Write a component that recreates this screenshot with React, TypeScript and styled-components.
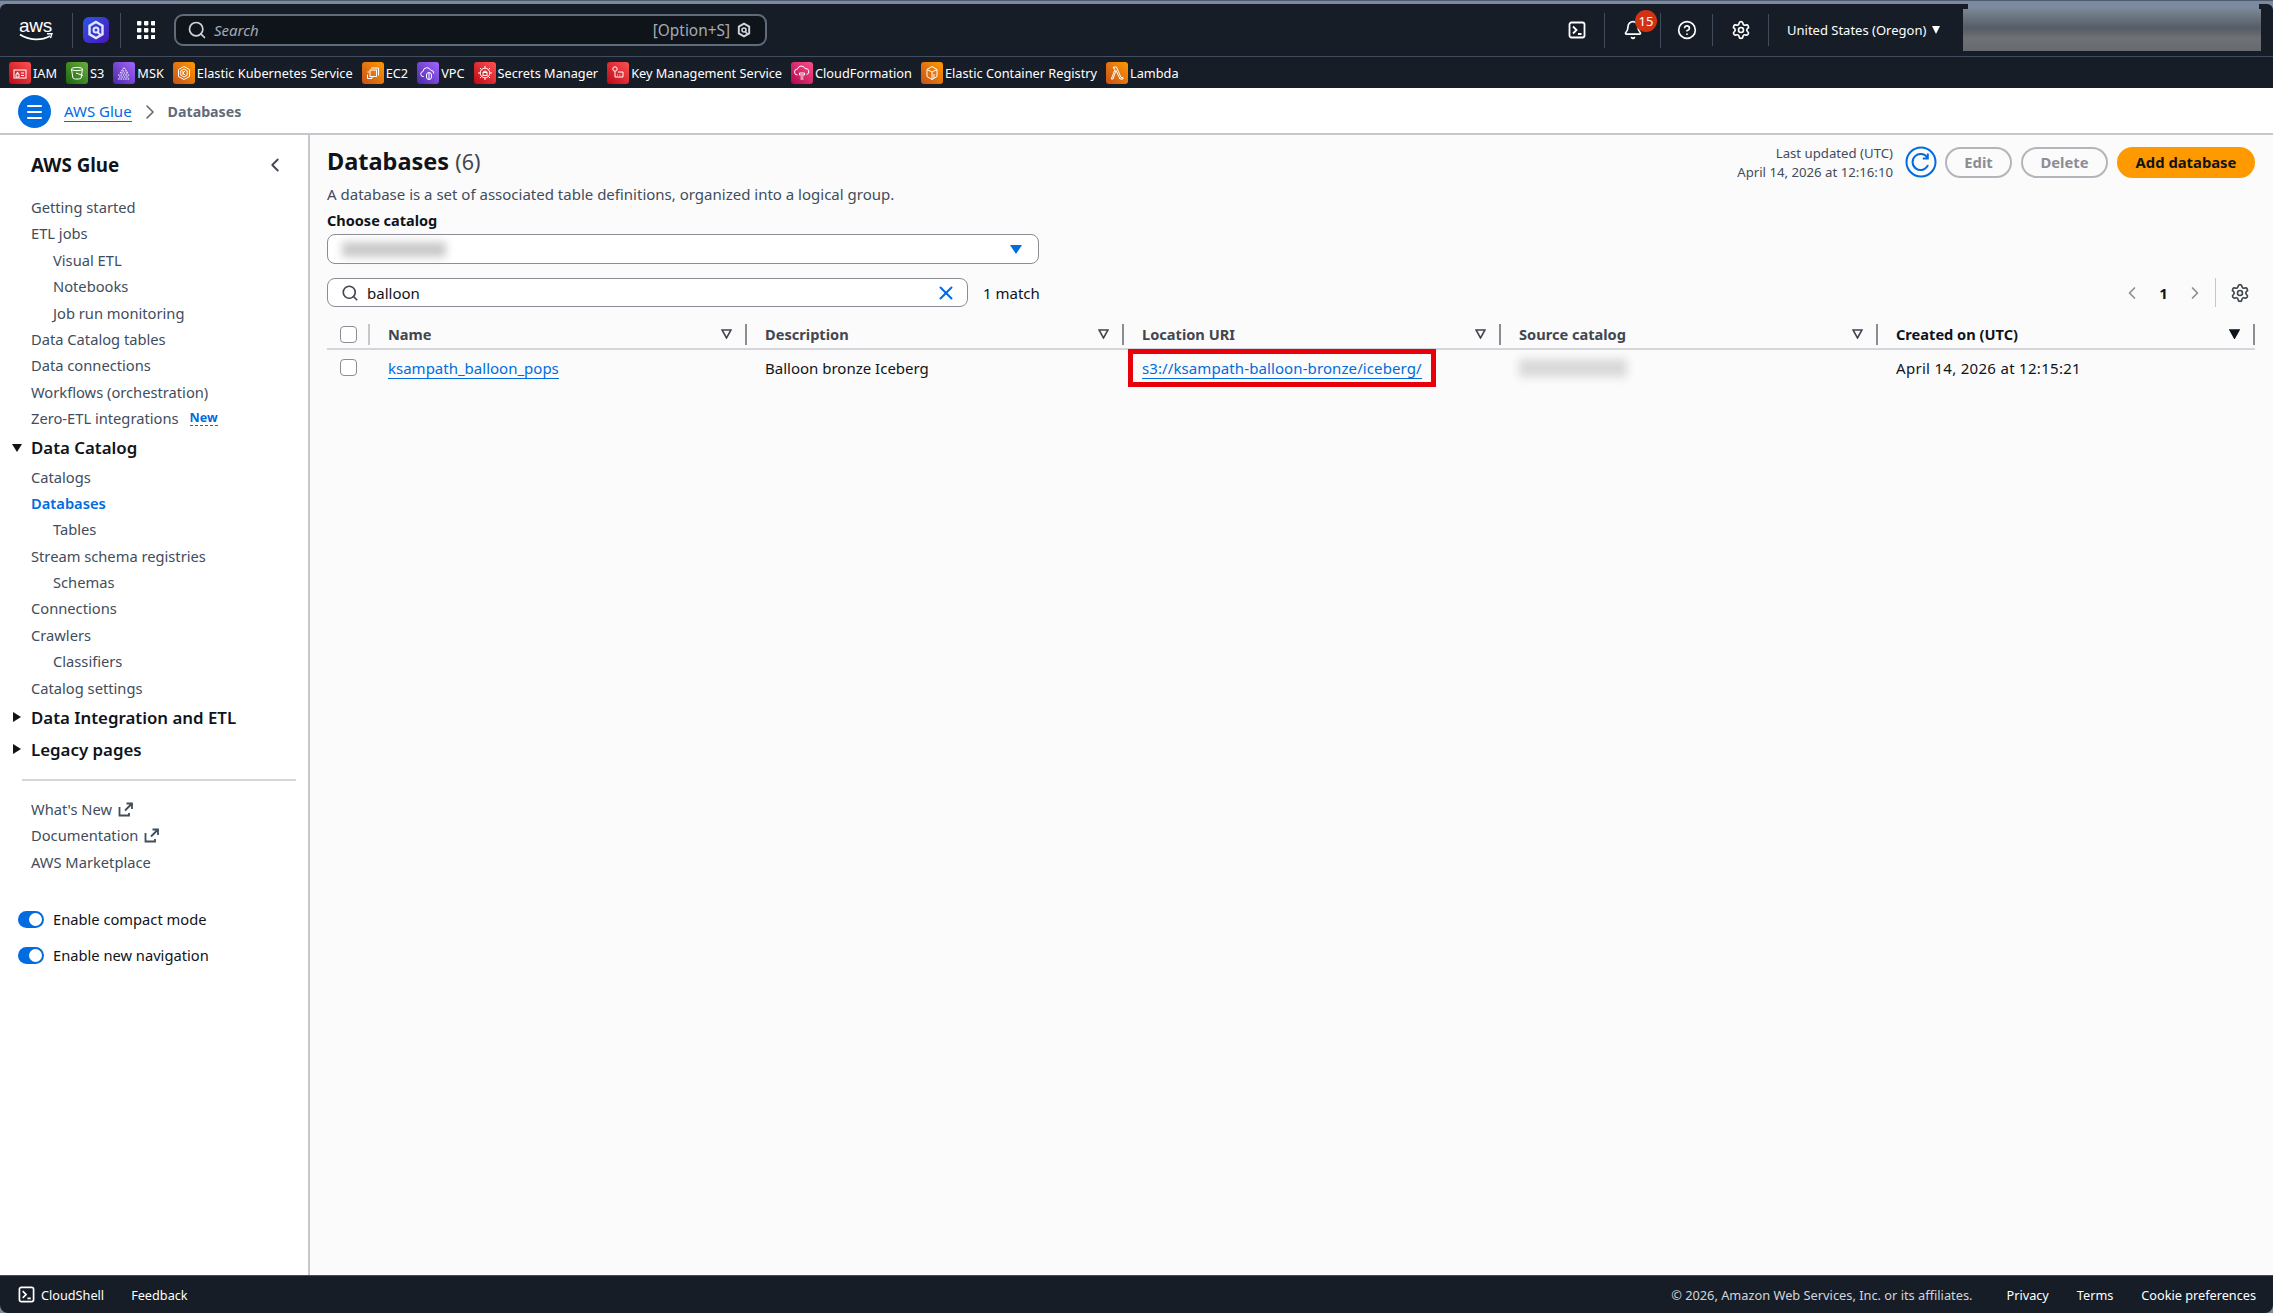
import { ReactNode } from 'react'
import styled, { createGlobalStyle } from 'styled-components'
import { Bell, ChevronLeft, ChevronRight, CircleHelp, Search, Settings, X } from 'lucide-react'

const FONT = '"Noto Sans", "Open Sans", sans-serif'

const GlobalStyle = createGlobalStyle`
  * { box-sizing: border-box; }
  html, body { margin: 0; padding: 0; background: #8d99aa; }
  body { font-family: ${FONT}; font-size: 15px; color: #0f141a; }
  a { color: inherit; text-decoration: none; }
  ul { list-style: none; margin: 0; padding: 0; }
`

const Shell = styled.div`
  display: flex;
  flex-direction: column;
  height: 100vh;
  overflow: hidden;
  border-top: 1px solid #4f5c6e;
  background: #7b8a9e;
`

const TopNav = styled.header`
  flex: none;
  height: 53px;
  margin-top: 3px;
  background: #161d27;
  border-bottom: 1px solid #414d5c;
  display: flex;
  align-items: center;
  position: relative;
  border-radius: 6px 6px 0 0;
`

const LogoCell = styled.div`
  width: 72px;
  padding-left: 19px;
  display: flex;
  flex-direction: column;
  color: #fff;
`

const LogoText = styled.span`
  font-family: "Liberation Sans", sans-serif;
  font-size: 19px;
  line-height: 14px;
  letter-spacing: -0.3px;
`

const NavSep = styled.span<{ $h?: number }>`
  flex: none;
  width: 1px;
  height: ${p => p.$h ?? 35}px;
  background: #414d5c;
`

const AppMark = styled.div`
  width: 26px;
  height: 26px;
  margin: 0 11px 0 10px;
  border-radius: 6px;
  background: linear-gradient(135deg, #2b57e8, #4a16b4);
  display: flex;
  align-items: center;
  justify-content: center;
`

const GridButton = styled.div`
  margin-left: 16px;
  width: 18px;
  height: 18px;
  display: flex;
`

const SearchBox = styled.div`
  margin-left: 19px;
  width: 593px;
  height: 32px;
  border: 2px solid #5f6b7a;
  border-radius: 9px;
  background: #0f141a;
  display: flex;
  align-items: center;
  padding: 0 13px 0 11px;
  color: #a4abb5;
`

const SearchPlaceholder = styled.span`
  font-style: italic;
  font-size: 15px;
  color: #a4abb5;
  margin-left: 7px;
  flex: 1;
`

const Shortcut = styled.span`
  font-size: 15.4px;
  color: #a4abb5;
  margin-right: 6px;
`

const NavRight = styled.div`
  margin-left: auto;
  display: flex;
  align-items: center;
  height: 100%;
`

const NavIcon = styled.div<{ $w: number }>`
  width: ${p => p.$w}px;
  height: 100%;
  display: flex;
  align-items: center;
  justify-content: center;
  color: #fff;
  position: relative;
`

const Badge = styled.span`
  position: absolute;
  top: 6px;
  right: 3px;
  width: 22px;
  height: 22px;
  border-radius: 50%;
  background: #d13212;
  color: #fff;
  font-size: 13px;
  display: flex;
  align-items: center;
  justify-content: center;
`

const Region = styled.div`
  display: flex;
  align-items: center;
  gap: 6px;
  padding-left: 18px;
  width: 194px;
  color: #fff;
  font-size: 13px;
`

const Caret = styled.span`
  width: 0;
  height: 0;
  border-left: 4.5px solid transparent;
  border-right: 4.5px solid transparent;
  border-top: 8px solid #fff;
`

const AccountBlur = styled.div`
  width: 298px;
  height: 42px;
  margin-right: 12px;
  background: linear-gradient(180deg, #7a8795 0%, #555c66 45%, #6f7174 70%, #66696e 100%);
  position: relative;
  &::before {
    content: '';
    position: absolute;
    left: 5px;
    right: 2px;
    top: -6px;
    height: 6px;
    background: #7b8a9e;
  }
`

const Favorites = styled.nav`
  flex: none;
  height: 31px;
  background: #161d27;
  display: flex;
  align-items: center;
  padding-left: 9px;
  gap: 9px;
`

const Favorite = styled.a`
  display: flex;
  align-items: center;
  gap: 2px;
  color: #fff;
  font-size: 12.75px;
  white-space: nowrap;
`

const ServiceIcon = styled.span<{ $from: string; $to: string }>`
  width: 22px;
  height: 22px;
  border-radius: 3px;
  background: linear-gradient(45deg, ${p => p.$from}, ${p => p.$to});
  display: flex;
  align-items: center;
  justify-content: center;
`

const Breadcrumbs = styled.div`
  flex: none;
  height: 47px;
  background: #fff;
  border-bottom: 2px solid #c6c6cd;
  display: flex;
  align-items: center;
  padding: 2px 0 0 18px;
`

const MenuButton = styled.div`
  width: 33px;
  height: 33px;
  border-radius: 50%;
  background: #006ce0;
  display: flex;
  flex-direction: column;
  align-items: center;
  justify-content: center;
  gap: 4px;
  margin-right: 13px;
  span { width: 15px; height: 2px; background: #fff; border-radius: 1px; }
`

const CrumbLink = styled.a`
  color: #006ce0;
  font-size: 15px;
  border-bottom: 1px solid #006ce0;
  line-height: 19px;
`

const CrumbCurrent = styled.span`
  color: #5f6b7a;
  font-size: 14.2px;
  font-weight: 700;
`

const Body = styled.div`
  flex: 1;
  min-height: 0;
  display: flex;
`

const Sidebar = styled.aside`
  width: 310px;
  flex: none;
  background: #fff;
  border-right: 2px solid #c6c6cd;
  padding-top: 16px;
`

const SideHeader = styled.div`
  display: flex;
  align-items: center;
  justify-content: space-between;
  height: 28px;
  padding: 0 22px 0 31px;
  margin-bottom: 15px;
  font-size: 18.8px;
  font-weight: 700;
  color: #0f141a;
`

const NavItem = styled.li<{ $indent?: boolean; $active?: boolean }>`
  height: 26.4px;
  line-height: 26.4px;
  padding-left: ${p => (p.$indent ? 53 : 31)}px;
  font-size: 14.7px;
  color: ${p => (p.$active ? '#006ce0' : '#414d5c')};
  font-weight: ${p => (p.$active ? 600 : 400)};
  white-space: nowrap;
  display: flex;
  align-items: center;
`

const NewTag = styled.span`
  margin-left: 11px;
  color: #006ce0;
  font-size: 12.5px;
  font-weight: 700;
  line-height: 15px;
  border-bottom: 1px dashed #006ce0;
`

const SectionTitle = styled.div<{ $h: number }>`
  height: ${p => p.$h}px;
  display: flex;
  align-items: center;
  padding-left: 12px;
  font-size: 16.85px;
  font-weight: 600;
  color: #0f141a;
  white-space: nowrap;
`

const CaretBox = styled.span`
  width: 19px;
  display: flex;
`

const SideDivider = styled.hr`
  border: 0;
  height: 2px;
  background: #d5d6dc;
  margin: 14px 12px 15px 22px;
`

const ToggleList = styled.div`
  margin-top: 32px;
  display: flex;
  flex-direction: column;
  gap: 12px;
`

const ToggleRow = styled.div`
  height: 24px;
  padding-left: 18px;
  display: flex;
  align-items: center;
  gap: 9px;
  font-size: 14.7px;
  color: #0f141a;
`

const Toggle = styled.span`
  width: 26px;
  height: 17px;
  border-radius: 9px;
  background: #006ce0;
  display: flex;
  align-items: center;
  justify-content: flex-end;
  padding-right: 2px;
  &::after {
    content: '';
    width: 13px;
    height: 13px;
    border-radius: 50%;
    background: #fff;
  }
`

const Main = styled.main`
  flex: 1;
  min-width: 0;
  background: #fbfbfb;
  padding: 7px 18px 0 17px;
`

const HeaderRow = styled.div`
  display: flex;
  justify-content: space-between;
  align-items: flex-start;
`

const Title = styled.h1`
  margin: 2px 0 0;
  font-size: 23.5px;
  font-weight: 700;
  line-height: 34px;
  color: #0f141a;
`

const Count = styled.span`
  font-weight: 400;
  font-size: 21.5px;
  color: #424650;
`

const Actions = styled.div`
  display: flex;
  align-items: center;
  gap: 9px;
`

const Updated = styled.div`
  text-align: right;
  font-size: 13.2px;
  line-height: 19px;
  color: #414d5c;
  margin: 2px 3px 0 0;
`

const PillButton = styled.button<{ $w: number; $primary?: boolean }>`
  width: ${p => p.$w}px;
  height: 31px;
  border-radius: 16px;
  font-family: ${FONT};
  font-size: 14.8px;
  font-weight: 700;
  padding: 0;
  border: 2px solid ${p => (p.$primary ? '#ff9900' : '#b4b4bb')};
  background: ${p => (p.$primary ? '#ff9900' : 'transparent')};
  color: ${p => (p.$primary ? '#0f141a' : '#8c8c94')};
`

const Description = styled.p`
  margin: 2px 0 0;
  font-size: 15px;
  line-height: 20px;
  color: #414d5c;
`

const FieldLabel = styled.div`
  margin-top: 6px;
  font-size: 14.5px;
  line-height: 20px;
  font-weight: 700;
  color: #0f141a;
`

const SelectBox = styled.div`
  margin-top: 4px;
  width: 712px;
  height: 30px;
  border: 1.5px solid #8c8c94;
  border-radius: 8px;
  background: #fff;
  display: flex;
  align-items: center;
  justify-content: space-between;
  padding: 0 16px 0 14px;
`

const BlurBlock = styled.span<{ $w: number; $h: number; $c: string }>`
  display: block;
  width: ${p => p.$w}px;
  height: ${p => p.$h}px;
  background: ${p => p.$c};
  filter: blur(4px);
`

const ArrowDown = styled.span`
  width: 0;
  height: 0;
  border-left: 6px solid transparent;
  border-right: 6px solid transparent;
  border-top: 9px solid #006ce0;
`

const Toolbar = styled.div`
  margin-top: 14px;
  height: 29px;
  display: flex;
  align-items: center;
`

const FilterBox = styled.div`
  width: 641px;
  height: 29px;
  border: 1.5px solid #8c8c94;
  border-radius: 8px;
  background: #fff;
  display: flex;
  align-items: center;
  padding: 0 10px 0 13px;
  color: #424650;
  gap: 8px;
`

const FilterInput = styled.input`
  flex: 1;
  min-width: 0;
  border: 0;
  outline: 0;
  padding: 0;
  background: transparent;
  font-family: ${FONT};
  font-size: 15px;
  color: #0f141a;
`

const MatchCount = styled.span`
  margin-left: 15px;
  font-size: 15px;
  color: #0f141a;
`

const Pager = styled.div`
  margin-left: auto;
  display: flex;
  align-items: center;
  height: 100%;
  padding-right: 5px;
  color: #8c8c94;
`

const PageNumber = styled.span`
  width: 43px;
  text-align: center;
  font-size: 15px;
  font-weight: 700;
  color: #0f141a;
`

const PagerSep = styled.span`
  width: 1px;
  height: 29px;
  background: #c6c6cd;
  margin: 0 14px 0 10px;
`

const Table = styled.div`
  margin-top: 13px;
`

const Row = styled.div<{ $head?: boolean }>`
  display: grid;
  grid-template-columns: 43px repeat(5, 1fr);
  align-items: center;
  height: ${p => (p.$head ? 30 : 35)}px;
  border-bottom: ${p => (p.$head ? '2px solid #d5d6dc' : '0')};
`

const CheckCell = styled.div<{ $sep?: boolean }>`
  height: 21px;
  padding-left: 13px;
  display: flex;
  align-items: center;
  border-right: ${p => (p.$sep ? '2px solid #c6c6cd' : '0')};
`

const Check = styled.span`
  width: 17px;
  height: 17px;
  border: 1.5px solid #8c8c94;
  border-radius: 4px;
  background: #fff;
`

const HeadCell = styled.div`
  height: 21px;
  display: flex;
  align-items: center;
  justify-content: space-between;
  padding: 0 13px 0 18px;
  border-right: 2px solid #8c8c94;
  font-size: 14.6px;
  font-weight: 700;
  color: #424650;
`

const HeadLabel = styled.span<{ $strong?: boolean }>`
  color: ${p => (p.$strong ? '#0f141a' : '#424650')};
`

const Cell = styled.div<{ $spaced?: boolean }>`
  padding-left: 18px;
  font-size: 15px;
  letter-spacing: ${p => (p.$spaced ? '0.3px' : '0')};
  color: #0f141a;
  white-space: nowrap;
`

const TableLink = styled.a`
  color: #006ce0;
  border-bottom: 1px solid #006ce0;
`

const Callout = styled.span`
  display: inline-block;
  outline: 5px solid #e8000b;
  outline-offset: 4px;
  line-height: 20px;
  padding: 0 5px;
  margin-left: -5px;
  letter-spacing: 0.1px;
`

const Footer = styled.footer`
  flex: none;
  height: 38px;
  background: #161d27;
  border-top: 1px solid #414d5c;
  border-radius: 0 0 8px 8px;
  display: flex;
  align-items: center;
  padding: 0 17px 0 18px;
  font-size: 12.7px;
  color: #fff;
`

const FooterLink = styled.a<{ $gap?: number }>`
  margin-left: ${p => p.$gap ?? 0}px;
  display: flex;
  align-items: center;
  gap: 6px;
`

const Copyright = styled.span`
  margin-left: auto;
  font-size: 12.8px;
  color: #d1d5db;
`

function AwsLogo() {
  return (
    <LogoCell>
      <LogoText>aws</LogoText>
      <svg width="34" height="9" viewBox="0 0 34 9" fill="none">
        <path d="M1 1.5c9 6 21 6.5 30 1.5" stroke="#fff" strokeWidth="1.8" />
        <path d="M28 .8l5-.3-1.5 4.6" stroke="#fff" strokeWidth="1.4" />
      </svg>
    </LogoCell>
  )
}

function HexQ({ size, color }: { size: number; color: string }) {
  return (
    <svg width={size} height={size} viewBox="0 0 20 20" fill="none" stroke={color} strokeWidth="2.4">
      <path d="M10 2l6.5 3.8v8.4L10 18l-6.5-3.8V5.8z" />
      <circle cx="10" cy="10" r="2.5" strokeWidth="2" />
      <path d="M11.5 12l3 3" strokeWidth="2" />
    </svg>
  )
}

function GridIcon() {
  const cells = [0, 7, 14]
  return (
    <svg width="18" height="18" viewBox="0 0 18 18" fill="#fff">
      {cells.map(y => cells.map(x => <rect key={`${x}-${y}`} x={x} y={y} width="4.4" height="4.4" rx="0.8" />))}
    </svg>
  )
}

function TerminalIcon({ size = 18 }: { size?: number }) {
  return (
    <svg width={size} height={size} viewBox="0 0 18 18" fill="none" stroke="#fff" strokeWidth="1.8">
      <rect x="1.5" y="1.5" width="15" height="15" rx="2" />
      <path d="M5 5.5l3.5 3.5L5 12.5M10 13h3.5" />
    </svg>
  )
}

const glyphProps = { width: 16, height: 16, viewBox: '0 0 16 16', fill: 'none', stroke: '#fff', strokeWidth: 1 }

const services: { label: string; from: string; to: string; glyph: ReactNode }[] = [
  {
    label: 'IAM', from: '#bd0816', to: '#ff5252',
    glyph: <svg {...glyphProps}><rect x="2" y="5" width="12" height="8" /><path d="M4 9h3v3H4zM9 8h3M9 10.5h3M5 9V7.5h1V9" /></svg>,
  },
  {
    label: 'S3', from: '#1b660f', to: '#6cae3e',
    glyph: <svg {...glyphProps}><ellipse cx="8" cy="4" rx="5.5" ry="1.6" /><path d="M2.5 4l1.4 9c.4 1.4 7.8 1.4 8.2 0l1.4-9M7 8l7 2.5" /></svg>,
  },
  {
    label: 'MSK', from: '#4d27a8', to: '#a166ff',
    glyph: <svg {...glyphProps}><path d="M8 2.5L12 8H4zM6.5 6h3M2 10h12M3 12h10M2 14h12" strokeDasharray="1.6 .8" /></svg>,
  },
  {
    label: 'Elastic Kubernetes Service', from: '#c8511b', to: '#ff9900',
    glyph: <svg {...glyphProps}><path d="M8 1.5l5.5 3v7L8 14.5l-5.5-3v-7z" /><path d="M8 4l3.2 1.8v4.4L8 12l-3.2-1.8V5.8zM7 6v4M7 8l2-2M7 8l2 2" /></svg>,
  },
  {
    label: 'EC2', from: '#c8511b', to: '#ff9900',
    glyph: <svg {...glyphProps}><rect x="5" y="5" width="6.5" height="6.5" /><path d="M6 3h7.5v7.5M2.5 7H4M2.5 9.5v4H7v-1.5" /></svg>,
  },
  {
    label: 'VPC', from: '#4d27a8', to: '#a166ff',
    glyph: <svg {...glyphProps}><path d="M4 11.5H3.5a2.5 2.5 0 01-.5-5 4 4 0 017.7-1.3 3 3 0 013 3.3" /><rect x="6.5" y="7.5" width="5" height="7" rx="2.5" /><path d="M9 7.5v7" /></svg>,
  },
  {
    label: 'Secrets Manager', from: '#bd0816', to: '#ff5252',
    glyph: <svg {...glyphProps}><circle cx="8" cy="8" r="4.8" /><rect x="6" y="7.5" width="4" height="3" /><path d="M6.8 7.5V6.3h2.4v1.2M8 1v2M8 13v2M1 8h2M13 8h2M3 3l1.5 1.5M13 3l-1.5 1.5M3 13l1.5-1.5M13 13l-1.5-1.5" /></svg>,
  },
  {
    label: 'Key Management Service', from: '#bd0816', to: '#ff5252',
    glyph: <svg {...glyphProps}><circle cx="5" cy="4" r="2.2" /><path d="M5 6.2V12h8V7H8M7 10h.8M9.5 10h.8" /></svg>,
  },
  {
    label: 'CloudFormation', from: '#b0084d', to: '#ff4f8b',
    glyph: <svg {...glyphProps}><path d="M3.5 10a3 3 0 010-6 4 4 0 017.6-.4 3 3 0 011.4 5.9" /><path d="M5.5 8h5v2h-5zM6.5 12h3M6.5 14h3" /></svg>,
  },
  {
    label: 'Elastic Container Registry', from: '#c8511b', to: '#ff9900',
    glyph: <svg {...glyphProps}><path d="M8 1.5l5 3v7L8 14.5l-5-3v-7zM8 14.5V7l5-2.5M8 7L3 4.5M10 9v4" /></svg>,
  },
  {
    label: 'Lambda', from: '#c8511b', to: '#ff9900',
    glyph: <svg {...glyphProps}><path d="M4.5 2H7.5l4.5 10.5h2V14h-3L7 5.5 4 14H2.3L6 4.4 5.5 3.4H4.5z" /></svg>,
  },
]

type NavEntry = { label: string; indent?: boolean; active?: boolean; isNew?: boolean; external?: boolean }

const mainNav: NavEntry[] = [
  { label: 'Getting started' },
  { label: 'ETL jobs' },
  { label: 'Visual ETL', indent: true },
  { label: 'Notebooks', indent: true },
  { label: 'Job run monitoring', indent: true },
  { label: 'Data Catalog tables' },
  { label: 'Data connections' },
  { label: 'Workflows (orchestration)' },
  { label: 'Zero-ETL integrations', isNew: true },
]

const catalogNav: NavEntry[] = [
  { label: 'Catalogs' },
  { label: 'Databases', active: true },
  { label: 'Tables', indent: true },
  { label: 'Stream schema registries' },
  { label: 'Schemas', indent: true },
  { label: 'Connections' },
  { label: 'Crawlers' },
  { label: 'Classifiers', indent: true },
  { label: 'Catalog settings' },
]

const linkNav: NavEntry[] = [
  { label: "What's New", external: true },
  { label: 'Documentation', external: true },
  { label: 'AWS Marketplace' },
]

function ExternalIcon() {
  return (
    <svg width="15" height="15" viewBox="0 0 15 15" fill="none" stroke="#414d5c" strokeWidth="1.8" style={{ marginLeft: 6 }}>
      <path d="M1.5 5v8.5H11V11M7 8.5L13.5 2M8.5 1.5h5.5v5.5" />
    </svg>
  )
}

function NavList({ items }: { items: NavEntry[] }) {
  return (
    <ul>
      {items.map(item => (
        <NavItem key={item.label} $indent={item.indent} $active={item.active}>
          {item.label}
          {item.isNew && <NewTag>New</NewTag>}
          {item.external && <ExternalIcon />}
        </NavItem>
      ))}
    </ul>
  )
}

function SectionCaret({ open }: { open?: boolean }) {
  return (
    <CaretBox>
      <svg width="10" height="10" viewBox="0 0 10 10" fill="#0f141a">
        {open ? <path d="M0 1h10L5 9z" /> : <path d="M1 0l8 5-8 5z" />}
      </svg>
    </CaretBox>
  )
}

function SortIcon({ active }: { active?: boolean }) {
  return (
    <svg width="11" height="10" viewBox="0 0 11 10" fill={active ? '#0f141a' : 'none'} stroke={active ? '#0f141a' : '#424650'} strokeWidth="1.6">
      <path d="M1 1h9L5.5 9z" />
    </svg>
  )
}

function RefreshIcon() {
  return (
    <svg width="32" height="32" viewBox="0 0 32 32" fill="none" stroke="#006ce0" strokeWidth="2" style={{ marginRight: -1 }}>
      <circle cx="16" cy="16" r="14.5" />
      <path d="M22.5 12a8 8 0 10.5 7" />
      <path d="M22.8 7.5v5h-5" />
    </svg>
  )
}

const columns = ['Name', 'Description', 'Location URI', 'Source catalog']

export default function App() {
  return (
    <>
      <GlobalStyle />
      <Shell>
        <TopNav>
          <AwsLogo />
          <NavSep />
          <AppMark><HexQ size={20} color="#dfe6ff" /></AppMark>
          <NavSep />
          <GridButton><GridIcon /></GridButton>
          <SearchBox>
            <Search size={20} color="#d1d5db" />
            <SearchPlaceholder>Search</SearchPlaceholder>
            <Shortcut>[Option+S]</Shortcut>
            <HexQ size={16} color="#d1d5db" />
          </SearchBox>
          <NavRight>
            <NavIcon $w={54}><TerminalIcon /></NavIcon>
            <NavSep />
            <NavIcon $w={55}><Bell size={20} /><Badge>15</Badge></NavIcon>
            <NavSep />
            <NavIcon $w={51}><CircleHelp size={20} /></NavIcon>
            <NavSep $h={32} />
            <NavIcon $w={55}><Settings size={20} /></NavIcon>
            <NavSep $h={32} />
            <Region>United States (Oregon)<Caret /></Region>
            <AccountBlur />
          </NavRight>
        </TopNav>

        <Favorites>
          {services.map(s => (
            <Favorite key={s.label}>
              <ServiceIcon $from={s.from} $to={s.to}>{s.glyph}</ServiceIcon>
              {s.label}
            </Favorite>
          ))}
        </Favorites>

        <Breadcrumbs>
          <MenuButton><span /><span /><span /></MenuButton>
          <CrumbLink>AWS Glue</CrumbLink>
          <ChevronRight size={24} color="#656871" strokeWidth={1.6} style={{ margin: '0 6px' }} />
          <CrumbCurrent>Databases</CrumbCurrent>
        </Breadcrumbs>

        <Body>
          <Sidebar>
            <SideHeader>
              AWS Glue
              <ChevronLeft size={22} color="#424650" />
            </SideHeader>
            <NavList items={mainNav} />
            <SectionTitle $h={32}><SectionCaret open />Data Catalog</SectionTitle>
            <NavList items={catalogNav} />
            <SectionTitle $h={32}><SectionCaret />Data Integration and ETL</SectionTitle>
            <SectionTitle $h={32}><SectionCaret />Legacy pages</SectionTitle>
            <SideDivider />
            <NavList items={linkNav} />
            <ToggleList>
              <ToggleRow><Toggle />Enable compact mode</ToggleRow>
              <ToggleRow><Toggle />Enable new navigation</ToggleRow>
            </ToggleList>
          </Sidebar>

          <Main>
            <HeaderRow>
              <Title>Databases <Count>(6)</Count></Title>
              <Actions>
                <Updated>Last updated (UTC)<br />April 14, 2026 at 12:16:10</Updated>
                <RefreshIcon />
                <PillButton $w={67}>Edit</PillButton>
                <PillButton $w={87}>Delete</PillButton>
                <PillButton $w={138} $primary>Add database</PillButton>
              </Actions>
            </HeaderRow>
            <Description>A database is a set of associated table definitions, organized into a logical group.</Description>
            <FieldLabel>Choose catalog</FieldLabel>
            <SelectBox>
              <BlurBlock $w={104} $h={15} $c="#c9c9c9" />
              <ArrowDown />
            </SelectBox>

            <Toolbar>
              <FilterBox>
                <Search size={18} strokeWidth={2.2} />
                <FilterInput readOnly value="balloon" />
                <X size={22} color="#006ce0" strokeWidth={2.2} />
              </FilterBox>
              <MatchCount>1 match</MatchCount>
              <Pager>
                <ChevronLeft size={20} />
                <PageNumber>1</PageNumber>
                <ChevronRight size={20} />
                <PagerSep />
                <Settings size={20} color="#424650" />
              </Pager>
            </Toolbar>

            <Table>
              <Row $head>
                <CheckCell $sep><Check /></CheckCell>
                {columns.map(c => (
                  <HeadCell key={c}>
                    <HeadLabel>{c}</HeadLabel>
                    <SortIcon />
                  </HeadCell>
                ))}
                <HeadCell>
                  <HeadLabel $strong>Created on (UTC)</HeadLabel>
                  <SortIcon active />
                </HeadCell>
              </Row>
              <Row>
                <CheckCell><Check /></CheckCell>
                <Cell><TableLink>ksampath_balloon_pops</TableLink></Cell>
                <Cell>Balloon bronze Iceberg</Cell>
                <Cell><Callout><TableLink>s3://ksampath-balloon-bronze/iceberg/</TableLink></Callout></Cell>
                <Cell><BlurBlock $w={108} $h={18} $c="#d9d9db" /></Cell>
                <Cell $spaced>April 14, 2026 at 12:15:21</Cell>
              </Row>
            </Table>
          </Main>
        </Body>

        <Footer>
          <FooterLink><TerminalIcon size={17} />CloudShell</FooterLink>
          <FooterLink $gap={27}>Feedback</FooterLink>
          <Copyright>© 2026, Amazon Web Services, Inc. or its affiliates.</Copyright>
          <FooterLink $gap={34}>Privacy</FooterLink>
          <FooterLink $gap={28}>Terms</FooterLink>
          <FooterLink $gap={28}>Cookie preferences</FooterLink>
        </Footer>
      </Shell>
    </>
  )
}
